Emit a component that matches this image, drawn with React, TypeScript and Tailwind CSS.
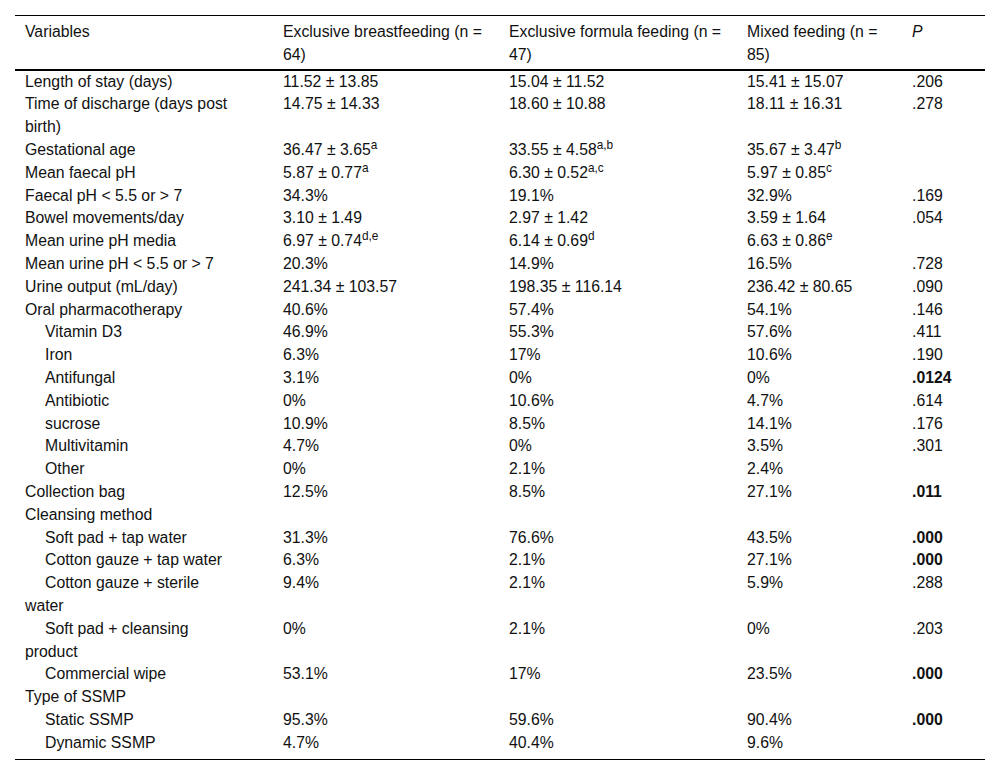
import React from "react"

type Row = {
  label: string
  indent?: boolean
  bf: React.ReactNode
  ff: React.ReactNode
  mf: React.ReactNode
  p?: string
  bold?: boolean
}

const rows: Row[] = [
  { label: "Length of stay (days)", bf: "11.52 ± 13.85", ff: "15.04 ± 11.52", mf: "15.41 ± 15.07", p: ".206" },
  { label: "Time of discharge (days post birth)", bf: "14.75 ± 14.33", ff: "18.60 ± 10.88", mf: "18.11 ± 16.31", p: ".278" },
  {
    label: "Gestational age",
    bf: <>36.47 ± 3.65<sup>a</sup></>,
    ff: <>33.55 ± 4.58<sup>a,b</sup></>,
    mf: <>35.67 ± 3.47<sup>b</sup></>,
  },
  {
    label: "Mean faecal pH",
    bf: <>5.87 ± 0.77<sup>a</sup></>,
    ff: <>6.30 ± 0.52<sup>a,c</sup></>,
    mf: <>5.97 ± 0.85<sup>c</sup></>,
  },
  { label: "Faecal pH < 5.5 or > 7", bf: "34.3%", ff: "19.1%", mf: "32.9%", p: ".169" },
  { label: "Bowel movements/day", bf: "3.10 ± 1.49", ff: "2.97 ± 1.42", mf: "3.59 ± 1.64", p: ".054" },
  {
    label: "Mean urine pH media",
    bf: <>6.97 ± 0.74<sup>d,e</sup></>,
    ff: <>6.14 ± 0.69<sup>d</sup></>,
    mf: <>6.63 ± 0.86<sup>e</sup></>,
  },
  { label: "Mean urine pH < 5.5 or > 7", bf: "20.3%", ff: "14.9%", mf: "16.5%", p: ".728" },
  { label: "Urine output (mL/day)", bf: "241.34 ± 103.57", ff: "198.35 ± 116.14", mf: "236.42 ± 80.65", p: ".090" },
  { label: "Oral pharmacotherapy", bf: "40.6%", ff: "57.4%", mf: "54.1%", p: ".146" },
  { label: "Vitamin D3", indent: true, bf: "46.9%", ff: "55.3%", mf: "57.6%", p: ".411" },
  { label: "Iron", indent: true, bf: "6.3%", ff: "17%", mf: "10.6%", p: ".190" },
  { label: "Antifungal", indent: true, bf: "3.1%", ff: "0%", mf: "0%", p: ".0124", bold: true },
  { label: "Antibiotic", indent: true, bf: "0%", ff: "10.6%", mf: "4.7%", p: ".614" },
  { label: "sucrose", indent: true, bf: "10.9%", ff: "8.5%", mf: "14.1%", p: ".176" },
  { label: "Multivitamin", indent: true, bf: "4.7%", ff: "0%", mf: "3.5%", p: ".301" },
  { label: "Other", indent: true, bf: "0%", ff: "2.1%", mf: "2.4%" },
  { label: "Collection bag", bf: "12.5%", ff: "8.5%", mf: "27.1%", p: ".011", bold: true },
  { label: "Cleansing method", bf: "", ff: "", mf: "" },
  { label: "Soft pad + tap water", indent: true, bf: "31.3%", ff: "76.6%", mf: "43.5%", p: ".000", bold: true },
  { label: "Cotton gauze + tap water", indent: true, bf: "6.3%", ff: "2.1%", mf: "27.1%", p: ".000", bold: true },
  { label: "Cotton gauze + sterile water", indent: true, bf: "9.4%", ff: "2.1%", mf: "5.9%", p: ".288" },
  { label: "Soft pad + cleansing product", indent: true, bf: "0%", ff: "2.1%", mf: "0%", p: ".203" },
  { label: "Commercial wipe", indent: true, bf: "53.1%", ff: "17%", mf: "23.5%", p: ".000", bold: true },
  { label: "Type of SSMP", bf: "", ff: "", mf: "" },
  { label: "Static SSMP", indent: true, bf: "95.3%", ff: "59.6%", mf: "90.4%", p: ".000", bold: true },
  { label: "Dynamic SSMP", indent: true, bf: "4.7%", ff: "40.4%", mf: "9.6%" },
]

export default function App() {
  return (
    <div className="min-h-[775px] w-full bg-white pt-[15px] font-['Liberation_Sans',Arial,sans-serif] text-[15.8px] leading-[22.8px] text-[#111]">
      <table className="mx-[15px] w-[970px] table-fixed border-collapse">
        <colgroup>
          <col className="w-[258px]" />
          <col className="w-[226px]" />
          <col className="w-[238px]" />
          <col className="w-[165px]" />
          <col className="w-[83px]" />
        </colgroup>
        <thead>
          <tr className="border-t border-b-2 border-black text-left align-top">
            <th className="pt-[5px] pb-[2px] pr-[41px] pl-[10px] font-normal">Variables</th>
            <th className="pt-[5px] pb-[2px] px-[10px] font-normal">Exclusive breastfeeding (n = 64)</th>
            <th className="pt-[5px] pb-[2px] px-[10px] font-normal">Exclusive formula feeding (n = 47)</th>
            <th className="pt-[5px] pb-[2px] px-[10px] font-normal">Mixed feeding (n = 85)</th>
            <th className="pt-[5px] pb-[2px] px-[10px] font-normal italic">P</th>
          </tr>
        </thead>
        <tbody className="border-b border-black">
          {rows.map((r, i) => {
            const last = i === rows.length - 1
            const pad = last ? "pb-[4px]" : ""
            return (
              <tr key={r.label} className="align-top">
                <td className={`pr-[41px] pl-[10px] ${r.indent ? "indent-5" : ""} ${pad}`}>{r.label}</td>
                <td className={`px-[10px] ${pad}`}>{r.bf}</td>
                <td className={`px-[10px] ${pad}`}>{r.ff}</td>
                <td className={`px-[10px] ${pad}`}>{r.mf}</td>
                <td className={`px-[10px] ${r.bold ? "font-bold" : ""} ${pad}`}>{r.p}</td>
              </tr>
            )
          })}
        </tbody>
      </table>
    </div>
  )
}
